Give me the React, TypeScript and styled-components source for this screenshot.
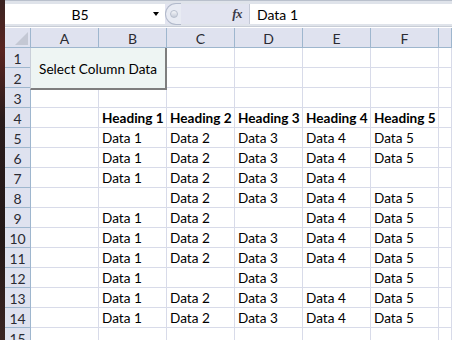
import React from 'react';
import styled, { createGlobalStyle } from 'styled-components';

const GlobalStyle = createGlobalStyle`
    html, body {
        margin: 0;
        padding: 0;
        background: #ffffff;
    }
    * {
        box-sizing: border-box;
    }
`;

const Window = styled.div`
    display: flex;
    flex-direction: row;
    width: 452px;
    height: 340px;
    overflow: hidden;
    font-family: Lato, 'Open Sans', sans-serif;
`;

const LeftStrip = styled.div`
    width: 5px;
    flex: none;
    background: linear-gradient(180deg, #3b2422 0%, #5a2420 15%, #2a1c1c 35%, #231818 70%, #3a2422 100%);
`;

const Main = styled.div`
    flex: 1;
    display: flex;
    flex-direction: column;
    min-width: 0;
`;

const FormulaBar = styled.div`
    height: 27px;
    flex: none;
    display: flex;
    flex-direction: row;
    padding: 3px 0 2px 0;
    background: #dfe3ea;
    border-bottom: 1px solid #c8cdd6;
    border-top: 1px solid #b9c0cc;
`;

const NameBox = styled.div`
    width: 160px;
    flex: none;
    display: flex;
    align-items: center;
    background: #ffffff;
    font-size: 14px;
    color: #000;
`;

const NameText = styled.div`
    flex: 1;
    text-align: center;
    padding-left: 2px;
`;

const DropArrow = styled.div`
    width: 0;
    height: 0;
    margin-right: 6px;
    border-left: 3.5px solid transparent;
    border-right: 3.5px solid transparent;
    border-top: 4px solid #000;
`;

const FxArea = styled.div`
    width: 85px;
    flex: none;
    display: flex;
    align-items: center;
    justify-content: space-between;
    background: #e2e4f0;
    border-right: 1px solid #c4c9d6;
    padding-right: 7px;
`;

const Knob = styled.div`
    width: 16px;
    height: 22px;
    margin-top: -1px;
    border: 1px solid #b2bacb;
    border-right: none;
    border-radius: 11px 0 0 11px;
    background: #e8ebf3;
    display: flex;
    align-items: center;
    padding-left: 4px;
`;

const KnobDot = styled.div`
    width: 8px;
    height: 8px;
    border-radius: 4px;
    background: linear-gradient(180deg, #f6f7fa 0%, #c6ccd9 100%);
    border: 1px solid #b8bfcd;
`;

const FxLabel = styled.div`
    font-family: 'Liberation Serif', serif;
    font-style: italic;
    font-weight: bold;
    font-size: 13px;
    color: #3a3a48;
    letter-spacing: -0.5px;
`;

const FormulaInput = styled.div`
    flex: 1;
    display: flex;
    align-items: center;
    padding-left: 7px;
    background: #ffffff;
    font-size: 14px;
    color: #000;
`;

const SheetWrap = styled.div`
    position: relative;
    flex: 1;
    margin-top: 1px;
`;

const Sheet = styled.div`
    display: grid;
    grid-template-columns: 26px repeat(6, 68px) 1fr;
    grid-auto-rows: 20px;
`;

const HeaderCell = styled.div`
    position: relative;
    display: flex;
    align-items: center;
    justify-content: center;
    background: #dfe2ef;
    border-right: 1px solid #9eb6ce;
    border-bottom: 1px solid #9eb6ce;
    font-size: 14px;
    color: #2b2b33;
    padding-top: 1px;
`;

const CornerTriangle = styled.div`
    position: absolute;
    right: 2px;
    bottom: 2px;
    width: 0;
    height: 0;
    border-left: 13px solid transparent;
    border-bottom: 13px solid #c4c8d4;
`;

const RowHeader = styled(HeaderCell)`
    justify-content: center;
    padding-top: 1px;
`;

const Cell = styled.div<{ $bold?: boolean }>`
    display: flex;
    align-items: center;
    padding: 1px 0 0 3px;
    border-right: 1px solid #d8dbe9;
    border-bottom: 1px solid #d8dbe9;
    font-size: 13.6px;
    font-weight: ${(props) => (props.$bold ? 'bold' : 'normal')};
    color: #000;
    white-space: nowrap;
    overflow: hidden;
`;

const SheetButton = styled.div`
    position: absolute;
    left: 25px;
    top: 20px;
    width: 137px;
    height: 42px;
    display: flex;
    align-items: center;
    justify-content: center;
    background: #eef5f3;
    border-right: 2px solid #7e7e7e;
    border-bottom: 2px solid #7e7e7e;
    border-left: 1px solid #c9cfd8;
    font-size: 13.6px;
    color: #000;
    padding-top: 1px;
`;

const columns = ['A', 'B', 'C', 'D', 'E', 'F', ''];

const dataRows: string[][] = [
    ['', '', '', '', '', '', ''],
    ['', '', '', '', '', '', ''],
    ['', '', '', '', '', '', ''],
    ['', 'Heading 1', 'Heading 2', 'Heading 3', 'Heading 4', 'Heading 5', ''],
    ['', 'Data 1', 'Data 2', 'Data 3', 'Data 4', 'Data 5', ''],
    ['', 'Data 1', 'Data 2', 'Data 3', 'Data 4', 'Data 5', ''],
    ['', 'Data 1', 'Data 2', 'Data 3', 'Data 4', '', ''],
    ['', '', 'Data 2', 'Data 3', 'Data 4', 'Data 5', ''],
    ['', 'Data 1', 'Data 2', '', 'Data 4', 'Data 5', ''],
    ['', 'Data 1', 'Data 2', 'Data 3', 'Data 4', 'Data 5', ''],
    ['', 'Data 1', 'Data 2', 'Data 3', 'Data 4', 'Data 5', ''],
    ['', 'Data 1', '', 'Data 3', '', 'Data 5', ''],
    ['', 'Data 1', 'Data 2', 'Data 3', 'Data 4', 'Data 5', ''],
    ['', 'Data 1', 'Data 2', 'Data 3', 'Data 4', 'Data 5', ''],
    ['', '', '', '', '', '', ''],
];

const App = () => {
    return (
        <>
            <GlobalStyle />
            <Window>
                <LeftStrip />
                <Main>
                    <FormulaBar>
                        <NameBox>
                            <NameText>B5</NameText>
                            <DropArrow />
                        </NameBox>
                        <FxArea>
                            <Knob>
                                <KnobDot />
                            </Knob>
                            <FxLabel>fx</FxLabel>
                        </FxArea>
                        <FormulaInput>Data 1</FormulaInput>
                    </FormulaBar>
                    <SheetWrap>
                        <Sheet>
                            <HeaderCell>
                                <CornerTriangle />
                            </HeaderCell>
                            {columns.map((col, i) => (
                                <HeaderCell key={'h' + i}>{col}</HeaderCell>
                            ))}
                            {dataRows.map((row, r) => (
                                <React.Fragment key={'r' + r}>
                                    <RowHeader>{r + 1}</RowHeader>
                                    {row.map((value, c) => (
                                        <Cell key={c} $bold={r === 3}>
                                            {value}
                                        </Cell>
                                    ))}
                                </React.Fragment>
                            ))}
                        </Sheet>
                        <SheetButton>Select Column Data</SheetButton>
                    </SheetWrap>
                </Main>
            </Window>
        </>
    );
};

export default App;
